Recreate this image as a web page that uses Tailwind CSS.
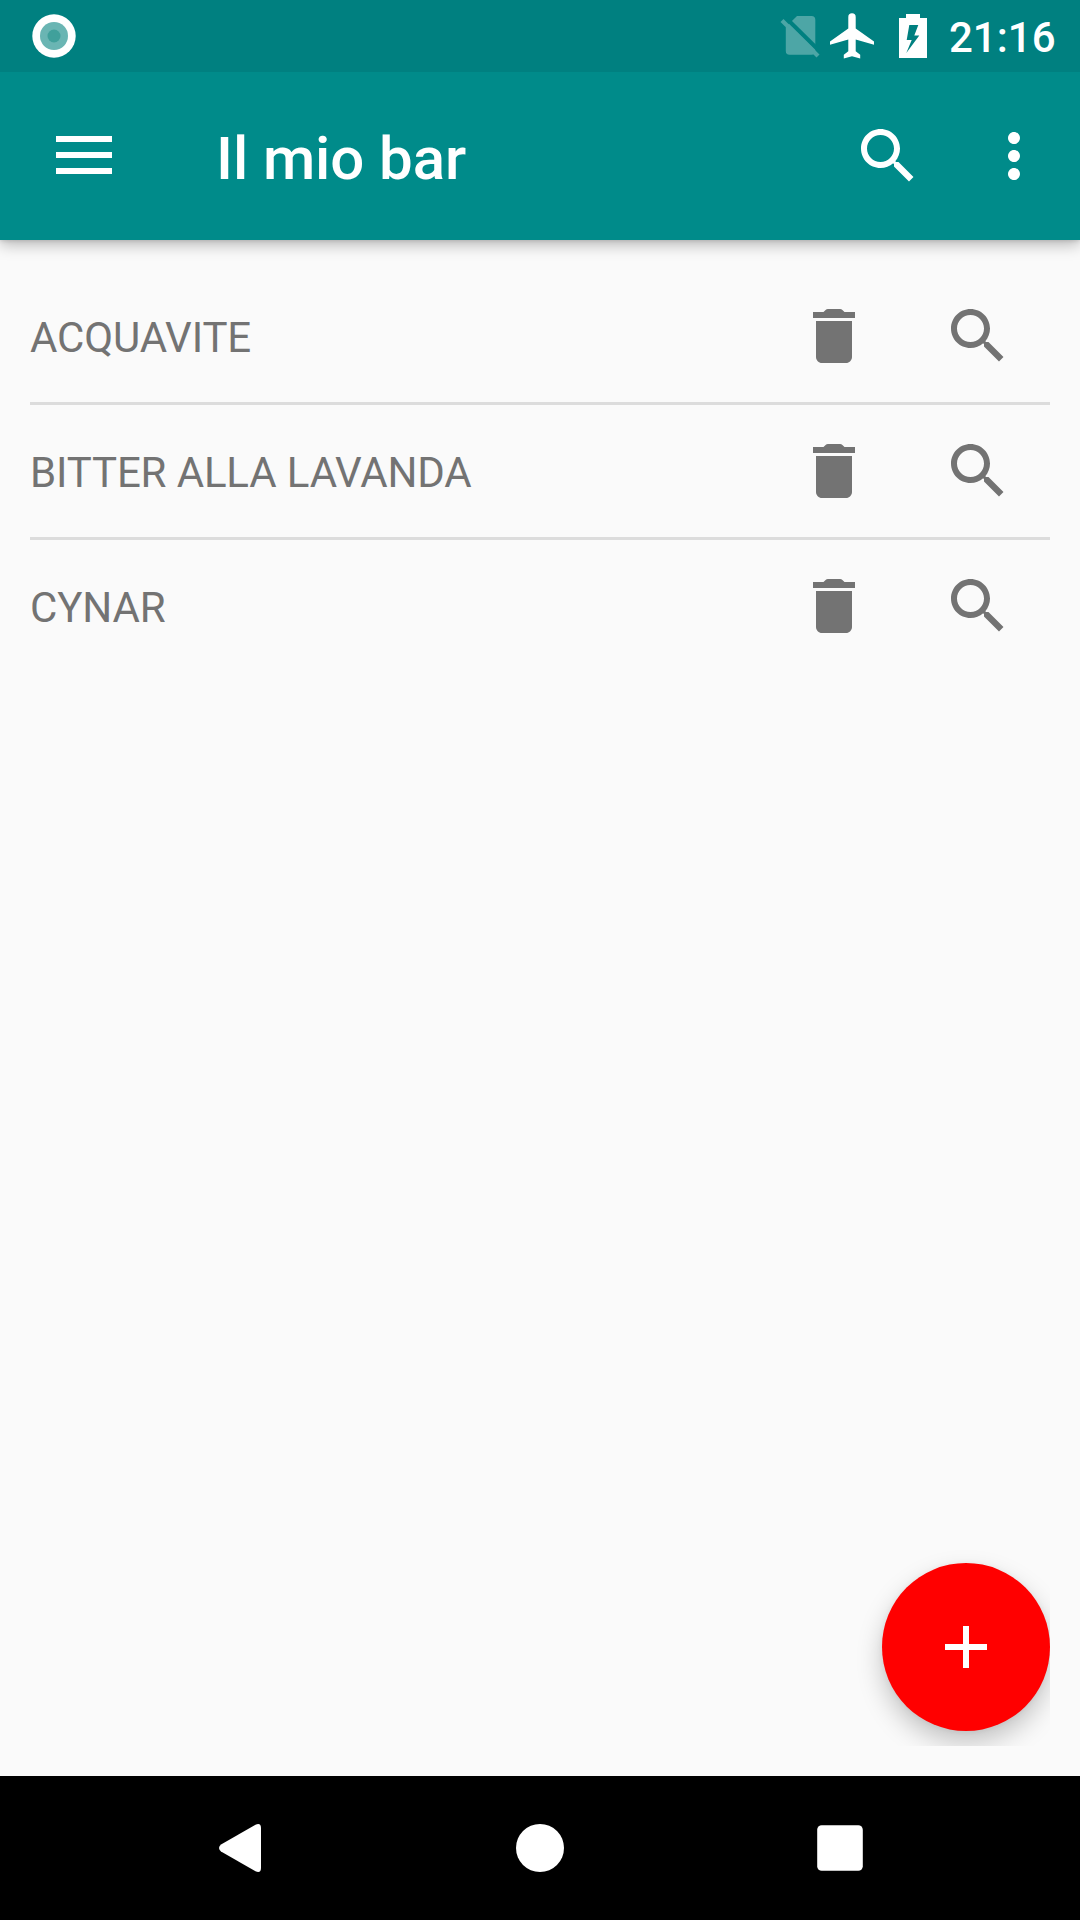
<!DOCTYPE html>
<html lang="it">
<head>
<meta charset="utf-8">
<title>Il mio bar</title>
<script src="https://cdn.jsdelivr.net/npm/@tailwindcss/browser@4"></script>
</head>
<body class="bg-[#fafafa]">
<svg class="hidden">
  <symbol id="search" viewBox="0 0 24 24"><path fill="currentColor" d="M15.5 14h-.79l-.28-.27C15.41 12.59 16 11.11 16 9.5 16 5.91 13.09 3 9.5 3S3 5.91 3 9.5 5.91 16 9.5 16c1.61 0 3.09-.59 4.23-1.57l.27.28v.79l5 4.99L20.49 19l-4.99-5zm-6 0C7.01 14 5 11.99 5 9.5S7.01 5 9.5 5 14 7.01 14 9.5 11.99 14 9.5 14z"/></symbol>
  <symbol id="trash" viewBox="0 0 24 24"><path fill="currentColor" d="M6 19c0 1.1.9 2 2 2h8c1.1 0 2-.9 2-2V7H6v12zM19 4h-3.5l-.7-.7Q14.500 3 14 3h-4Q9.500 3 9.200 3.300L8.500 4H5v2h14V4z"/></symbol>
</svg>
<div class="flex h-[1920px] w-[1080px] flex-col overflow-hidden bg-[#fafafa] font-['Roboto',sans-serif]">
  <header class="z-10 flex flex-col shadow-[0_5px_14px_rgba(0,0,0,0.26),0_1px_4px_rgba(0,0,0,0.12)]">
    <div class="flex h-18 items-center justify-between bg-[#008080] pr-[24px] pl-8">
      <svg class="h-11 w-11" viewBox="0 0 44 44"><circle cx="22" cy="22" r="21.700" fill="#fff"/><circle cx="22" cy="22" r="14" fill="#6ab5b3"/><circle cx="22" cy="22" r="6.500" fill="#40a09b"/></svg>
      <div class="flex items-center">
        <svg class="h-18 w-[170px]" viewBox="776 0 170 72">
          <path fill="#4da6a6" d="M797 16h14.500q3.800 0 3.800 3.800V51q0 3.800-3.800 3.800h-22q-3.700 0-3.700-3.800V27z"/>
          <path d="M784 16L821.500 53" stroke="#008080" stroke-width="4"/>
          <path d="M782 20.500L818 56" stroke="#4da6a6" stroke-width="4.200"/>
          <path fill="#fff" d="M848.300 17q0-3.700 3.700-3.700t3.700 3.700v11.500L874 41.500v3.300l-18.300-5.200v11.600l4.500 3.600v3.700l-8.200-2.300-8.200 2.300v-3.700l4.500-3.600V39.600L830 44.800v-3.300l18.300-13z"/>
          <path fill="#fff" fill-rule="evenodd" d="M906 14h14v4h7v40h-28V18h7zM909.300 25L906.700 40H911.700L906.300 53L919.300 35.500H914.300L918.300 25z"/>
        </svg>
        <div class="w-[110px] pl-[3px] pt-[3px] text-[42px] leading-none font-medium whitespace-nowrap text-white">21:16</div>
      </div>
    </div>
    <div class="flex h-[168px] items-center bg-[#008b8a] pr-[30px] pl-12 text-white">
      <svg class="size-18 -mt-[2px]" viewBox="0 0 24 24"><path fill="currentColor" d="M2.667 18.330h18.667v-2H2.667zm0-5.333h18.667v-2H2.667zm0-7.333v2h18.667v-2z"/></svg>
      <h1 class="ml-24 flex-1 pt-[5px] text-[60px] leading-none font-medium tracking-[-0.1px]">Il mio bar</h1>
      <svg class="size-18"><use href="#search"/></svg>
      <svg class="ml-[54px] size-18" viewBox="0 0 24 24"><path fill="currentColor" d="M12 8c1.100 0 2-.9 2-2s-.9-2-2-2-2 .9-2 2 .9 2 2 2zm0 2c-1.100 0-2 .9-2 2s.9 2 2 2 2-.9 2-2-.9-2-2-2zm0 6c-1.100 0-2 .9-2 2s.9 2 2 2 2-.9 2-2-.9-2-2-2z"/></svg>
    </div>
  </header>
  <main class="flex flex-1 flex-col justify-between">
    <ul class="flex flex-col px-[30px] pt-[30px] text-[42px] tracking-[-0.14px] text-[#737373]">
      <li class="flex h-[135px] items-center border-b-3 border-[#dcdcdc] pr-9"><span class="flex-1 pt-[3px] leading-none">ACQUAVITE</span><svg class="size-18"><use href="#trash"/></svg><svg class="ml-18 size-18"><use href="#search"/></svg></li>
      <li class="flex h-[135px] items-center border-b-3 border-[#dcdcdc] pr-9"><span class="flex-1 pt-[3px] leading-none">BITTER ALLA LAVANDA</span><svg class="size-18"><use href="#trash"/></svg><svg class="ml-18 size-18"><use href="#search"/></svg></li>
      <li class="flex h-[132px] items-center pr-9"><span class="flex-1 pt-[3px] leading-none">CYNAR</span><svg class="size-18"><use href="#trash"/></svg><svg class="ml-18 size-18"><use href="#search"/></svg></li>
    </ul>
    <div class="mr-[30px] mb-[30px] flex justify-end overflow-hidden pt-10 pb-[15px]">
      <button class="flex size-[168px] items-center justify-center rounded-full bg-[#ff0000] shadow-[0_12px_26px_rgba(0,0,0,0.22),0_1px_6px_rgba(0,0,0,0.06)]">
        <svg class="size-18" viewBox="0 0 24 24"><path fill="#fff" d="M19 13h-6v6h-2v-6H5v-2h6V5h2v6h6v2z"/></svg>
      </button>
    </div>
  </main>
  <nav class="flex h-36 items-center justify-center gap-[228px] bg-black">
    <svg class="size-18" viewBox="0 0 72 72"><path fill="#fff" d="M17 32.500L51.500 12.700Q57 10.500 57 16v40q0 5.500-5.500 3.300L17 39.500q-4-3.500 0-7z"/></svg>
    <svg class="size-18" viewBox="0 0 72 72"><circle cx="36" cy="36" r="24" fill="#fff"/></svg>
    <svg class="size-18" viewBox="0 0 72 72"><rect x="13.200" y="13.200" width="45.600" height="45.600" rx="4.500" fill="#fff"/></svg>
  </nav>
</div>
</body>
</html>
